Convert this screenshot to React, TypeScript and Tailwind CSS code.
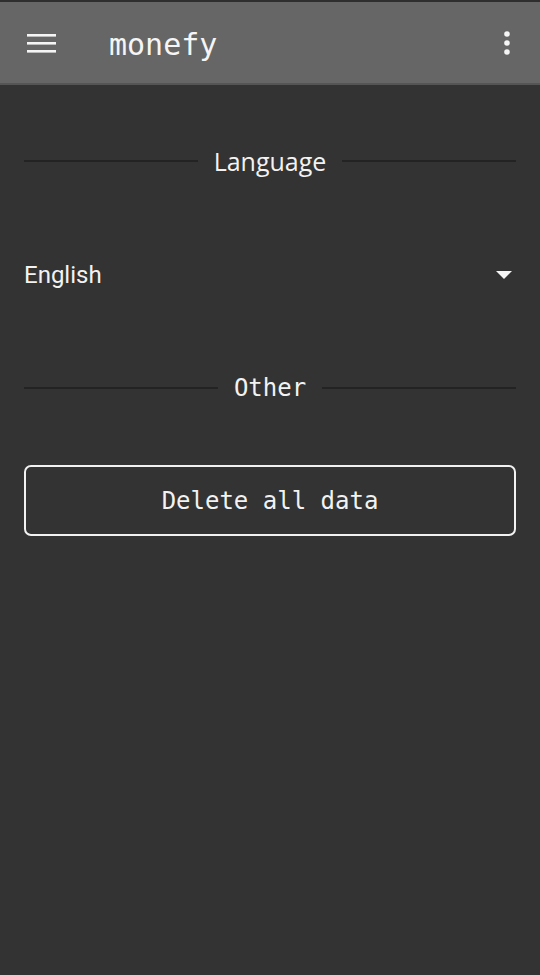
import React from 'react';

const mono = { fontFamily: '"DejaVu Sans Mono", "Liberation Mono", monospace' };

const SectionTitle: React.FC<{ title: string; sans?: boolean }> = ({ title, sans }) => (
  <div className="flex items-center gap-4 h-[30px]">
    <div className="h-[2px] flex-1 bg-[#232323]" />
    <span
      className={
        sans
          ? "text-[25px] leading-[30px] text-[#f2f2f2] font-['Open_Sans',sans-serif]"
          : 'text-[24px] leading-[30px] text-[#f2f2f2]'
      }
      style={sans ? undefined : mono}
    >
      {title}
    </span>
    <div className="h-[2px] flex-1 bg-[#232323]" />
  </div>
);

const App: React.FC = () => {
  return (
    <div className="w-[540px] h-[975px] bg-[#333333] flex flex-col border-t-2 border-[#2e2e2e]">
      <header className="h-[83px] bg-[#666666] border-b-2 border-[#555555] flex items-center px-[27px]">
        <svg width="29" height="20" viewBox="0 0 29 20" className="shrink-0">
          <rect x="0" y="1" width="29" height="2.6" fill="#f5f5f5" />
          <rect x="0" y="9" width="29" height="2.6" fill="#f5f5f5" />
          <rect x="0" y="17" width="29" height="2.6" fill="#f5f5f5" />
        </svg>
        <span className="ml-[53px] mt-[4px] text-[30px] text-[#f5f5f5] leading-none" style={mono}>
          monefy
        </span>
        <svg width="10" height="26" viewBox="0 0 10 26" className="ml-auto mr-[1px]">
          <circle cx="5" cy="4" r="2.8" fill="#f5f5f5" />
          <circle cx="5" cy="13" r="2.8" fill="#f5f5f5" />
          <circle cx="5" cy="22" r="2.8" fill="#f5f5f5" />
        </svg>
      </header>

      <main className="px-6 flex flex-col">
        <div className="mt-[61px]">
          <SectionTitle title="Language" sans />
        </div>

        <div className="mt-[84px] h-[30px] flex items-center justify-between">
          <span className="text-[24px] leading-[30px] text-[#f2f2f2] font-['Roboto',sans-serif]">English</span>
          <svg width="16" height="8" viewBox="0 0 16 8" className="mr-[4px]">
            <path d="M0 0 L16 0 L8 8 Z" fill="#f5f5f5" />
          </svg>
        </div>

        <div className="mt-[83px]">
          <SectionTitle title="Other" />
        </div>

        <button
          className="mt-[62px] h-[71px] w-full rounded-[7px] border-2 border-[#f2f2f2] text-[24px] text-[#f2f2f2]"
          style={mono}
        >
          Delete all data
        </button>
      </main>
    </div>
  );
};

export default App;
